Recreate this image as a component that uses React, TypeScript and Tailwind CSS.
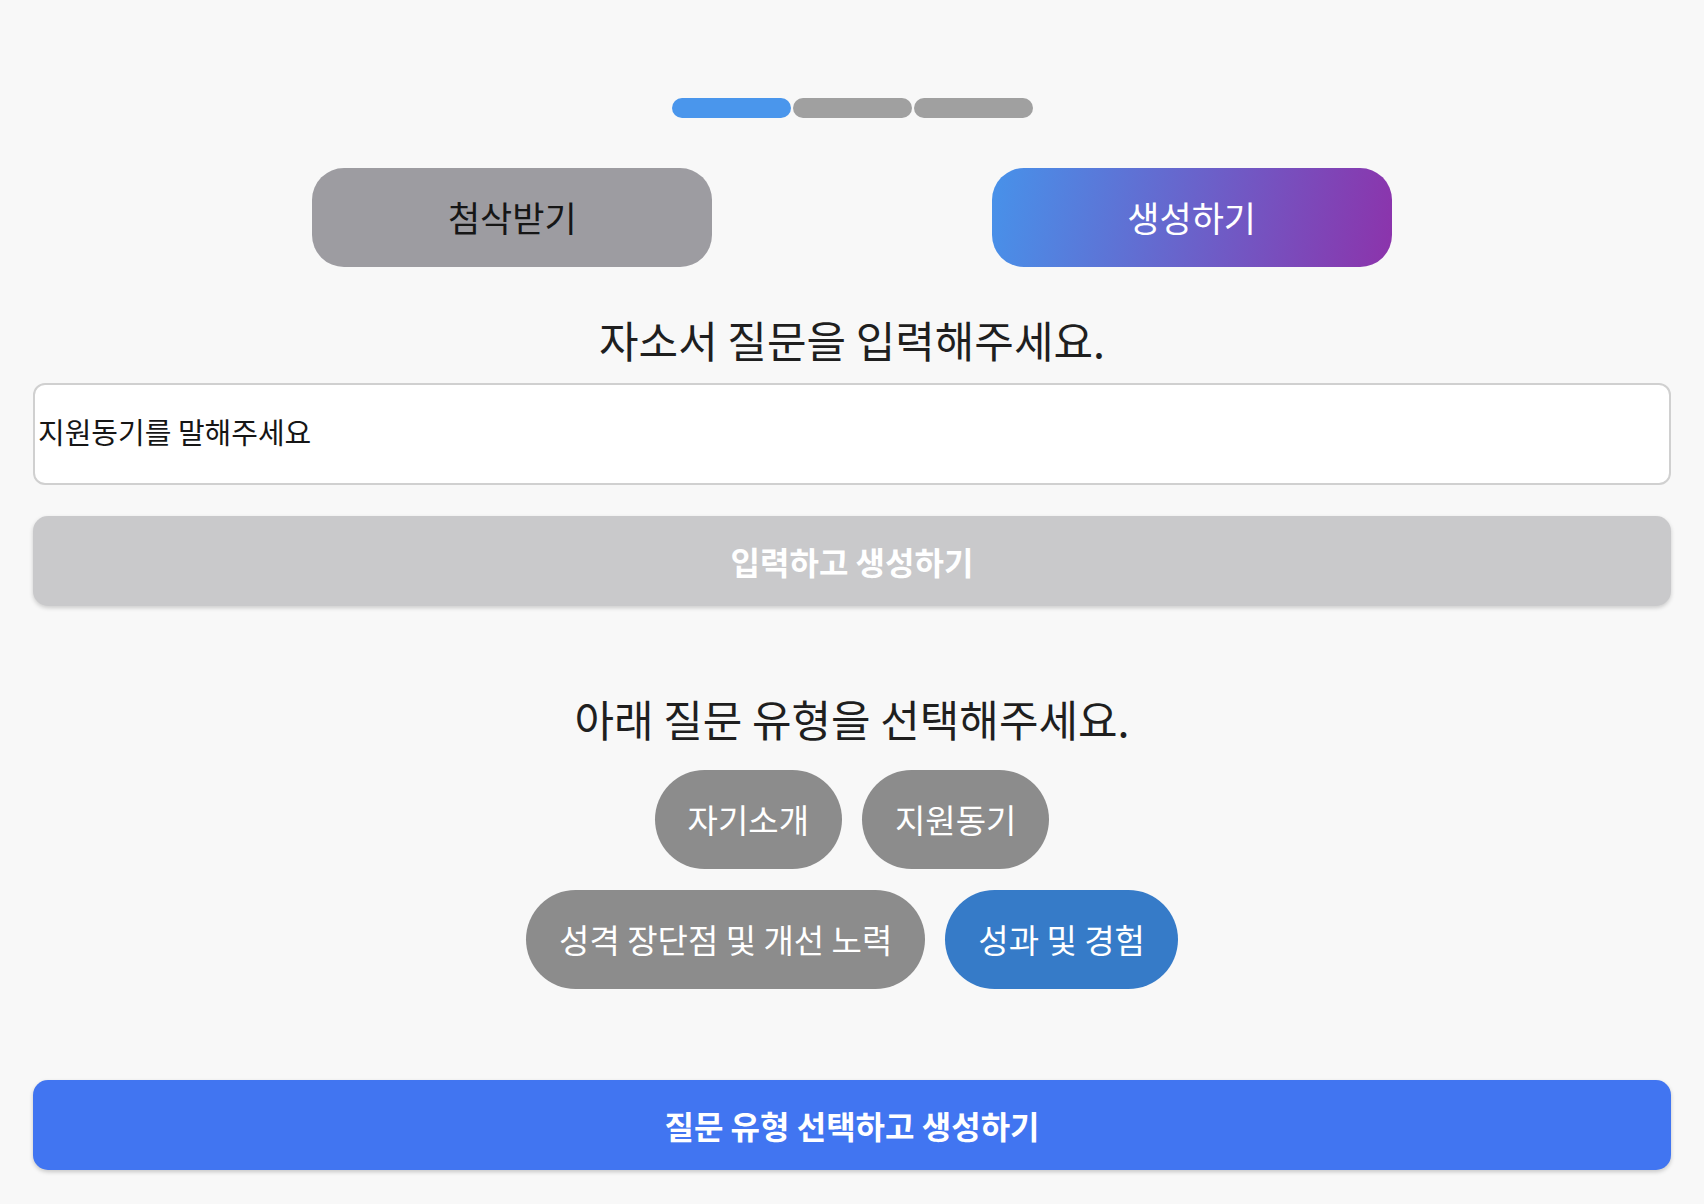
import { useState } from "react";

const font = "font-['Noto_Sans_CJK_KR','Noto_Sans',sans-serif]";

export default function App() {
  const [question, setQuestion] = useState("지원동기를 말해주세요");
  const [selected, setSelected] = useState("성과 및 경험");

  const rows = [
    ["자기소개", "지원동기"],
    ["성격 장단점 및 개선 노력", "성과 및 경험"],
  ];

  return (
    <div className={`min-h-[1204px] w-full bg-[#f8f8f8] px-[33px] ${font}`}>
      {/* step indicator */}
      <div className="flex justify-center gap-[2px] pt-[98px]">
        <div className="h-[20px] w-[119px] rounded-full bg-[#4a96ec]" />
        <div className="h-[20px] w-[119px] rounded-full bg-[#a0a0a0]" />
        <div className="h-[20px] w-[119px] rounded-full bg-[#a0a0a0]" />
      </div>

      {/* mode tabs */}
      <div className="mt-[50px] flex justify-evenly">
        <button className="flex h-[99px] w-[400px] items-center justify-center rounded-[32px] bg-[#9d9ca1] text-[35px] text-[#161616]">
          첨삭받기
        </button>
        <button className="flex h-[99px] w-[400px] items-center justify-center rounded-[32px] bg-[linear-gradient(100deg,#4792ea,#8c33ab)] text-[35px] text-white">
          생성하기
        </button>
      </div>

      <h2 className="mt-[48px] text-center text-[43px] leading-[48px] text-[#1f1f1f]">
        자소서 질문을 입력해주세요.
      </h2>

      <input
        value={question}
        onChange={(e) => setQuestion(e.target.value)}
        className="mt-[20px] block h-[102px] w-full rounded-[12px] border-2 border-[#d0d0d0] bg-white px-[3px] pb-[6px] text-[29px] text-[#161616] outline-none"
      />

      <button className="mt-[31px] flex h-[90px] w-full items-center justify-center rounded-[15px] bg-[#c9c9cb] text-[32px] font-bold text-white shadow-[0_2px_4px_rgba(0,0,0,0.18)]">
        입력하고 생성하기
      </button>

      <h2 className="mt-[88px] text-center text-[43px] leading-[48px] text-[#1f1f1f]">
        아래 질문 유형을 선택해주세요.
      </h2>

      <div className="mt-[28px] flex flex-col items-center gap-[21px]">
        {rows.map((row, i) => (
          <div key={i} className="flex gap-[20px]">
            {row.map((label) => (
              <button
                key={label}
                onClick={() => setSelected(label)}
                className={
                  label === selected
                    ? "flex h-[99px] items-center rounded-full bg-[#367bc8] px-[33px] text-[33px] text-white"
                    : "flex h-[99px] items-center rounded-full bg-[#8c8c8c] px-[33px] text-[33px] text-white"
                }
              >
                {label}
              </button>
            ))}
          </div>
        ))}
      </div>

      <button className="mt-[91px] flex h-[90px] w-full items-center justify-center rounded-[15px] bg-[#4175f1] text-[32px] font-bold text-white shadow-[0_2px_4px_rgba(0,0,0,0.2)]">
        질문 유형 선택하고 생성하기
      </button>
    </div>
  );
}
